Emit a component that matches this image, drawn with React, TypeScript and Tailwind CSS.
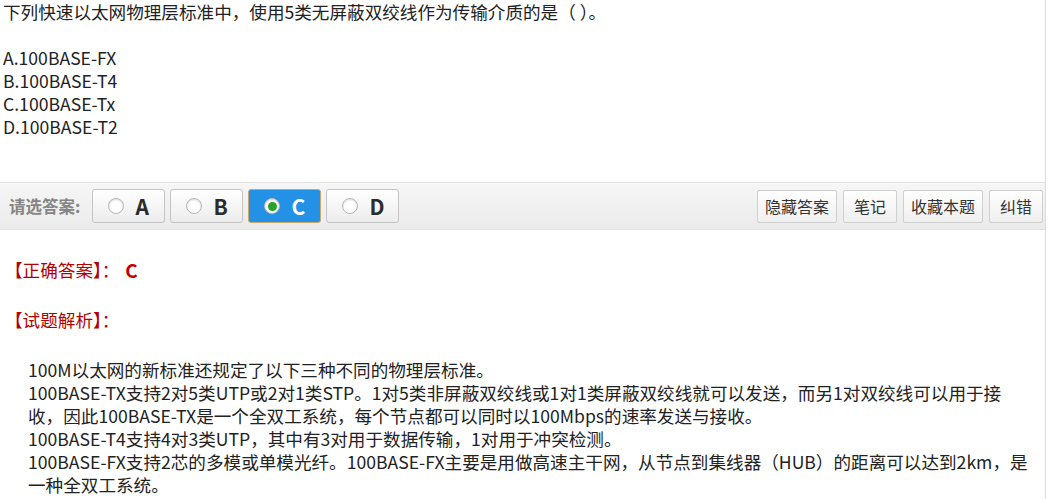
import React from "react";

const options = ["A.100BASE-FX", "B.100BASE-T4", "C.100BASE-Tx", "D.100BASE-T2"];
const choices = ["A", "B", "C", "D"];
const selected = "C";

const analysis = [
  "100M以太网的新标准还规定了以下三种不同的物理层标准。",
  "100BASE-TX支持2对5类UTP或2对1类STP。1对5类非屏蔽双绞线或1对1类屏蔽双绞线就可以发送，而另1对双绞线可以用于接",
  "收，因此100BASE-TX是一个全双工系统，每个节点都可以同时以100Mbps的速率发送与接收。",
  "100BASE-T4支持4对3类UTP，其中有3对用于数据传输，1对用于冲突检测。",
  "100BASE-FX支持2芯的多模或单模光纤。100BASE-FX主要是用做高速主干网，从节点到集线器（HUB）的距离可以达到2km，是",
  "一种全双工系统。",
];

function Radio({ on }: { on: boolean }) {
  return (
    <span className="flex h-[16px] w-[16px] items-center justify-center rounded-full border border-[#b5b5b5] bg-white shadow-[inset_0_1px_2px_rgba(0,0,0,0.15)]">
      {on && <span className="h-[9px] w-[9px] rounded-full bg-[#2aa12a]" />}
    </span>
  );
}

function ChoiceButton({ label }: { label: string }) {
  const on = label === selected;
  return (
    <button
      type="button"
      className={
        on
          ? "flex h-[34px] w-[73px] items-center gap-[11px] rounded-[3px] border border-[#c9a86a] bg-[#2391e6] pl-[15px] text-[21px] font-bold text-white"
          : "flex h-[34px] w-[73px] items-center gap-[11px] rounded-[3px] border border-[#c4c4c4] bg-gradient-to-b from-white to-[#ececec] pl-[15px] text-[21px] font-bold text-[#2b2b2b]"
      }
    >
      <Radio on={on} />
      <span className="leading-none">{label}</span>
    </button>
  );
}

function ToolButton({ label }: { label: string }) {
  return (
    <button
      type="button"
      className="flex h-[33px] min-w-[54px] items-center justify-center rounded-[2px] border border-[#cfcfcf] bg-gradient-to-b from-white to-[#efefef] px-[7px] text-[16px] text-[#333]"
    >
      {label}
    </button>
  );
}

export default function App() {
  return (
    <div
      className="h-[499px] w-[1048px] overflow-hidden bg-white text-[#333]"
      style={{ fontFamily: '"Noto Sans CJK SC", "Noto Sans", sans-serif' }}
    >
      <div className="h-full w-[1046px] border-r border-[#dcdcdc]">
        <div className="pl-[3px] text-[17.6px] leading-[23px] text-[#222]">
          <p className="whitespace-nowrap">
            下列快速以太网物理层标准中，使用5类无屏蔽双绞线作为传输介质的是（ ）。
          </p>
          <p>&nbsp;</p>
          {options.map((o) => (
            <p key={o}>{o}</p>
          ))}
        </div>

        <div className="mt-[44px] flex h-[48px] items-center justify-between border-y border-[#e2e2e2] bg-gradient-to-b from-[#f6f6f6] to-[#ebebeb] pl-[9px] pr-[2px]">
          <div className="flex items-center">
            <span className="mr-[12px] text-[16.5px] font-bold text-[#858585]">请选答案:</span>
            <div className="flex gap-[5px]">
              {choices.map((c) => (
                <ChoiceButton key={c} label={c} />
              ))}
            </div>
          </div>
          <div className="flex gap-[6px]">
            {["隐藏答案", "笔记", "收藏本题", "纠错"].map((t) => (
              <ToolButton key={t} label={t} />
            ))}
          </div>
        </div>

        <div className="mt-[28px] pl-[5px] text-[17.6px] leading-[23px] text-[#b30000]">
          <p className="flex items-center">
            【正确答案】：
            <span className="ml-[6px] text-[19px] font-bold text-[#c40000]">C</span>
          </p>
          <p className="mt-[27px]">【试题解析】：</p>
        </div>

        <div className="mt-[27px] pl-[28px] text-[17.6px] leading-[23px] text-[#222]">
          {analysis.map((l, i) => (
            <p key={i} className="whitespace-nowrap">
              {l}
            </p>
          ))}
        </div>
      </div>
    </div>
  );
}
